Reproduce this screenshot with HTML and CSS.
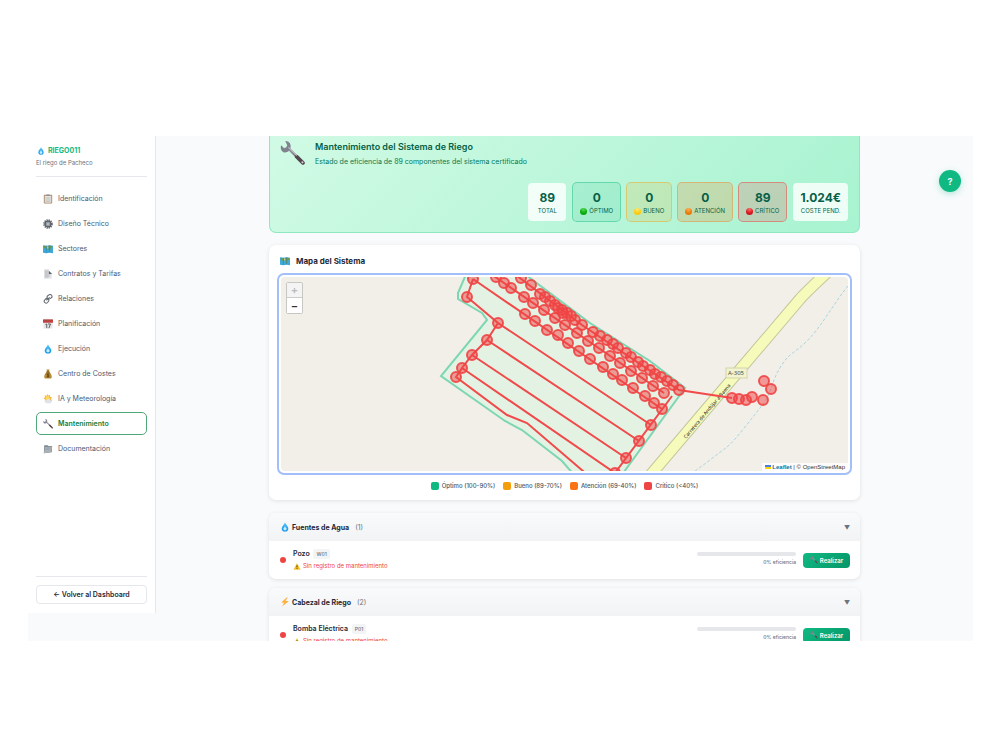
FILE: index.html
```html
<!DOCTYPE html>
<html lang="es">
<head>
    <meta charset="UTF-8">
    <meta name="viewport" content="width=device-width, initial-scale=1.0">
    <title>Mantenimiento - RIEGO011</title>
    <link rel="stylesheet" href="styles.css">
</head>
<body>
    <!-- Iconos -->
    <svg class="sprite" aria-hidden="true">
        <defs>
            <linearGradient id="gota" x1="0" y1="0" x2="0" y2="1">
                <stop offset="0" stop-color="#5cc8fa"/>
                <stop offset="1" stop-color="#0a8fe6"/>
            </linearGradient>
            <linearGradient id="metal" x1="0" y1="0" x2="1" y2="1">
                <stop offset="0" stop-color="#9a9aa6"/>
                <stop offset="1" stop-color="#4f4650"/>
            </linearGradient>
        </defs>
        <symbol id="i-drop" viewBox="0 0 24 24">
            <path d="M12 1C10 6 4 10 4 15.500a8 7.500 0 0 0 16 0C20 10 14 6 12 1z" fill="url(#gota)"/>
            <path d="M12 10c-1 3-4 4-4 7a4 3.500 0 0 0 8 0c0-3-3-4-4-7z" fill="#c8edff"/>
        </symbol>
        <symbol id="i-clipboard" viewBox="0 0 24 24">
            <rect x="2" y="2" width="20" height="21" rx="2" fill="#a9825c"/>
            <rect x="4" y="4" width="16" height="17" fill="#e4e4e2"/>
            <path d="M6 9h12M6 12h12M6 15h12M6 18h12" stroke="#a5a5a5"/>
            <rect x="8" y="1" width="8" height="4" rx="1" fill="#8d8d92"/>
        </symbol>
        <symbol id="i-gear" viewBox="0 0 24 24">
            <circle cx="12" cy="12" r="9.500" fill="none" stroke="#5b6068" stroke-width="4" stroke-dasharray="3 2"/>
            <circle cx="12" cy="12" r="7" fill="#a5abb3" stroke="#5b6068" stroke-width="3"/>
            <circle cx="12" cy="12" r="3" fill="#e6e8ea" stroke="#4a4e55" stroke-width="1"/>
        </symbol>
        <symbol id="i-map" viewBox="0 0 24 24">
            <path d="M0 3l8 1 8-1 8 1v18l-8-1-8 1-8-1z" fill="#3fa9d9"/>
            <path d="M2 4l5 1 3 5-3 3-2-3-3-1zM12 5l4-1 6 1v4l-4 2-2 8-3-5 1-4z" fill="#6f9a52"/>
            <path d="M9 5l4 3-2 4z" fill="#f0d26a"/>
            <path d="M8 4v17M16 3v17" stroke="#2672a3"/>
        </symbol>
        <symbol id="i-page" viewBox="0 0 24 24">
            <path d="M3 1h11v22H3z" fill="#d2d4d8"/>
            <path d="M14 4l8 8-8 1z" fill="#5e6268"/>
            <path d="M14 13h7v10h-7z" fill="#e4e4e7"/>
            <path d="M5 6h6M5 9h6M5 12h6M5 15h11M5 18h11" stroke="#a7aab0"/>
        </symbol>
        <symbol id="i-link" viewBox="0 0 24 24" fill="none" stroke="#666b73" stroke-width="2.500">
            <rect x="10" y="2" width="12" height="9" rx="4.500" transform="rotate(-30 16 7)"/>
            <rect x="2" y="12" width="12" height="9" rx="4.500" transform="rotate(-50 8 16)"/>
            <path d="M8 15l8-7"/>
        </symbol>
        <symbol id="i-calendar" viewBox="0 0 24 24">
            <rect x="1" y="1" width="22" height="22" rx="1" fill="#e6e6e6"/>
            <path d="M0 1h24v8H0z" fill="#c3423f"/>
            <path d="M4 1v4M8 1v4M12 1v4M16 1v4M20 1v4" stroke="#7d5a5a"/>
            <path d="M6 13l3-1v10M12 12h6l-4 10" fill="none" stroke="#44464a" stroke-width="2"/>
        </symbol>
        <symbol id="i-money" viewBox="0 0 24 24">
            <path d="M8 1h8l-2 5c5 4 7 9 7 13 0 3-2 4-4 4H7c-2 0-4-1-4-4 0-4 2-9 7-13z" fill="#b58a35"/>
            <path d="M8 7h8" stroke="#6e4d16" stroke-width="2"/>
            <path d="M15 12c-5-2-7 2-3 3s3 5-3 3M12 10v11" fill="none" stroke="#5e4012" stroke-width="2"/>
        </symbol>
        <symbol id="i-sun" viewBox="0 0 24 24">
            <path d="M11 0l2 4 4-2v5l5 1-3 4 3 4-18 2 1-5-4-2 4-3-1-5 5 1z" fill="#f8b83a"/>
            <circle cx="11" cy="10" r="5" fill="#ffd65a"/>
            <path d="M8 22a4 4 0 0 1 1-8 5 5 0 0 1 9 1 4 4 0 0 1 1 7z" fill="#dfe2e9"/>
        </symbol>
        <symbol id="i-wrench" viewBox="0 0 24 24">
            <path d="M8 7L22 21" stroke="url(#metal)" stroke-width="2.500" stroke-linecap="round"/>
            <path d="M16 15l6 6" stroke="#54474f" stroke-width="3.500" stroke-linecap="round"/>
            <path d="M5 0l2 4-1 2-2 1-3-3c-1 4 1 7 4 7l3-1 2-3c1-4-1-7-5-7z" fill="#80828e"/>
            <path d="M8 6l8 8" stroke="#c0bec8" stroke-width="1"/>
            <circle cx="21.500" cy="20.500" r="1" fill="#d8d0d4"/>
        </symbol>
        <symbol id="i-folder" viewBox="0 0 24 24">
            <path d="M3 3h8l2 2h9l-1 15-19 2z" fill="#7d868e"/>
            <path d="M5 7l17-1-3 14-17 2z" fill="#aab2b8"/>
            <path d="M7 10l11-1M6 13l11-1" stroke="#87919a"/>
        </symbol>
        <symbol id="i-bolt" viewBox="0 0 24 24">
            <path d="M16 1L3 13l7 1-5 9 16-13-8-1 6-8z" fill="#fbb13c"/>
        </symbol>
        <symbol id="i-warning" viewBox="0 0 24 24">
            <path d="M12 2l11 20H1z" fill="#fcc41c" stroke="#e6a90e" stroke-linejoin="round"/>
            <path d="M12 8v7M12 17v3" stroke="#2b2b2b" stroke-width="3"/>
        </symbol>
    </svg>

    <div class="app">
        <aside class="sidebar">
            <div class="brand">
                <div class="brand-name"><svg class="icon"><use href="#i-drop"/></svg>RIEGO011</div>
                <div class="brand-sub">El riego de Pacheco</div>
            </div>
            <nav class="nav">
                <a class="nav-item" href="#"><svg class="icon"><use href="#i-clipboard"/></svg>Identificación</a>
                <a class="nav-item" href="#"><svg class="icon"><use href="#i-gear"/></svg>Diseño Técnico</a>
                <a class="nav-item" href="#"><svg class="icon"><use href="#i-map"/></svg>Sectores</a>
                <a class="nav-item" href="#"><svg class="icon"><use href="#i-page"/></svg>Contratos y Tarifas</a>
                <a class="nav-item" href="#"><svg class="icon"><use href="#i-link"/></svg>Relaciones</a>
                <a class="nav-item" href="#"><svg class="icon"><use href="#i-calendar"/></svg>Planificación</a>
                <a class="nav-item" href="#"><svg class="icon"><use href="#i-drop"/></svg>Ejecución</a>
                <a class="nav-item" href="#"><svg class="icon"><use href="#i-money"/></svg>Centro de Costes</a>
                <a class="nav-item" href="#"><svg class="icon"><use href="#i-sun"/></svg>IA y Meteorología</a>
                <a class="nav-item active" href="#"><svg class="icon"><use href="#i-wrench"/></svg>Mantenimiento</a>
                <a class="nav-item" href="#"><svg class="icon"><use href="#i-folder"/></svg>Documentación</a>
            </nav>
            <div class="sidebar-footer">
                <a class="back" href="#">← Volver al Dashboard</a>
            </div>
        </aside>

        <main class="main">
            <div class="content">
                <section class="hero">
                    <div class="hero-top">
                        <svg class="hero-icon"><use href="#i-wrench"/></svg>
                        <div>
                            <h1>Mantenimiento del Sistema de Riego</h1>
                            <p>Estado de eficiencia de 89 componentes del sistema certificado</p>
                        </div>
                    </div>
                    <div class="stats">
                        <div class="stat"><strong>89</strong><span>TOTAL</span></div>
                        <div class="stat optimo"><strong>0</strong><span><i class="ball"></i>ÓPTIMO</span></div>
                        <div class="stat bueno"><strong>0</strong><span><i class="ball"></i>BUENO</span></div>
                        <div class="stat atencion"><strong>0</strong><span><i class="ball"></i>ATENCIÓN</span></div>
                        <div class="stat critico"><strong>89</strong><span><i class="ball"></i>CRÍTICO</span></div>
                        <div class="stat"><strong>1.024€</strong><span>COSTE PEND.</span></div>
                    </div>
                </section>

                <section class="card map-card">
                    <h2><svg class="icon"><use href="#i-map"/></svg>Mapa del Sistema</h2>
                    <div class="map">
                        <svg class="map-canvas" viewBox="280 277 569 194" preserveAspectRatio="xMidYMid slice">
                            <defs>
                                <marker id="nodo" markerUnits="userSpaceOnUse" markerWidth="14" markerHeight="14" refX="7" refY="7">
                                    <circle cx="7" cy="7" r="5" fill="#ef4444" fill-opacity="0.5" stroke="#ef4444" stroke-width="2" stroke-opacity="0.9"/>
                                </marker>
                                <path id="carretera" d="M686 439L744 370"/>
                            </defs>
                            <!-- carretera y arroyo -->
                            <path class="road-edge" d="M640 487L653 472L743 366L800 299Q804 294 835 265"/>
                            <path class="road" d="M640 487L653 472L743 366L800 299Q804 294 835 265"/>
                            <path class="stream" d="M848 286C837 299 827 317 815 332S793 352 788 357S776 373 773 383S765 402 760 408S735 441 727 447S705 464 695 471"/>
                            <text class="road-name"><textPath href="#carretera">Carretera de Andújar a Baena</textPath></text>
                            <rect class="road-sign" x="726" y="368" width="21" height="10"/>
                            <text class="road-ref" x="736" y="375">A-305</text>
                            <!-- parcela -->
                            <path class="plot" d="M467 272L458 293V299L482 313L487 320L441 376L505 421L522 430L562 461L575 476H621L685 388L650 361L590 323L522 272"/>
                            <!-- tuberías -->
                            <path class="pipe" d="M473 279L467 297L498 323L487 340L472 355L462 368L456 377L507 415L527 423L590 477
                                M462 368L615 473M472 355L626 458M487 340L639 441M498 323L651 425M473 279L662 409
                                M488 272L664 393M512 272L582 325L679 390L732 398M672 396L615 473"/>
                            <!-- componentes -->
                            <path class="nodes" d="M473 279L467 297L498 323L487 340L472 355L462 368L456 377"/>
                            <path class="nodes" d="M496 277L504 283L511 288L524 297L533 303L544 310L555 318L565 325L577 333L588 341L599 348L610 356L620 363L631 371L642 378L653 386L664 393"/>
                            <path class="nodes" d="M525 314L535 321L547 330L558 335L568 343L579 351L590 359L603 367L613 374L622 380L633 388L645 396L654 403L662 409L651 425L639 441L626 458L615 473"/>
                            <path class="nodes" d="M521 278L531 285L540 294L545 297L550 301L555 305L558 308L562 310L563 313L567 313L571 316L575 320L582 325L593 332L600 336L607 340L613 344L618 348L626 353L631 357L638 362L643 366L650 370L655 374L661 377L667 381L673 385L679 390"/>
                            <path class="nodes" d="M732 398L739 399L746 400L752 397L763 400L771 389L764 381"/>
                        </svg>
                        <div class="zoom">
                            <button type="button" disabled aria-label="Acercar">+</button>
                            <button type="button" aria-label="Alejar">−</button>
                        </div>
                        <div class="attribution">
                            <svg class="flag" viewBox="0 0 12 8"><path d="M0 0h12v4H0z" fill="#4c7be1"/><path d="M0 4h12v4H0z" fill="#ffd500"/></svg>
                            <a href="#">Leaflet</a> | © OpenStreetMap
                        </div>
                    </div>
                    <div class="legend">
                        <span><i class="swatch optimo"></i>Óptimo (100-90%)</span>
                        <span><i class="swatch bueno"></i>Bueno (89-70%)</span>
                        <span><i class="swatch atencion"></i>Atención (69-40%)</span>
                        <span><i class="swatch critico"></i>Crítico (&lt;40%)</span>
                    </div>
                </section>

                <section class="card group">
                    <div class="group-header">
                        <svg class="icon"><use href="#i-drop"/></svg>
                        <h3>Fuentes de Agua</h3>
                        <span class="count">(1)</span>
                        <span class="arrow">▼</span>
                    </div>
                    <div class="row">
                        <i class="dot"></i>
                        <div class="info">
                            <div class="name">Pozo <span class="code">W01</span></div>
                            <div class="alert"><svg class="icon"><use href="#i-warning"/></svg>Sin registro de mantenimiento</div>
                        </div>
                        <div class="efficiency">
                            <div class="bar"></div>
                            <span>0% eficiencia</span>
                        </div>
                        <button class="action" type="button"><svg class="icon"><use href="#i-wrench"/></svg>Realizar</button>
                    </div>
                </section>

                <section class="card group">
                    <div class="group-header">
                        <svg class="icon"><use href="#i-bolt"/></svg>
                        <h3>Cabezal de Riego</h3>
                        <span class="count">(2)</span>
                        <span class="arrow">▼</span>
                    </div>
                    <div class="row">
                        <i class="dot"></i>
                        <div class="info">
                            <div class="name">Bomba Eléctrica <span class="code">P01</span></div>
                            <div class="alert"><svg class="icon"><use href="#i-warning"/></svg>Sin registro de mantenimiento</div>
                        </div>
                        <div class="efficiency">
                            <div class="bar"></div>
                            <span>0% eficiencia</span>
                        </div>
                        <button class="action" type="button"><svg class="icon"><use href="#i-wrench"/></svg>Realizar</button>
                    </div>
                </section>
            </div>
        </main>

        <button class="help" type="button">?</button>
    </div>
</body>
</html>
```
FILE: styles.css
```css
* {
    box-sizing: border-box;
}

body {
    margin: 0;
    height: 100vh;
    padding: 136px 27px 109px 28px;
    font-family: Inter, "Liberation Sans", sans-serif;
    font-size: 7px;
    color: #1f2937;
    background: #fff;
}

h1, h2, h3, p {
    margin: 0;
}

a {
    text-decoration: none;
}

button {
    font-family: inherit;
    cursor: pointer;
}

.sprite {
    position: absolute;
    width: 0;
    height: 0;
}

.icon {
    width: 10px;
    height: 10px;
    flex-shrink: 0;
}

.app {
    position: relative;
    display: flex;
    height: 100%;
    overflow: hidden;
    background: #f8fafc;
}

/* Barra lateral */
.sidebar {
    display: flex;
    flex-direction: column;
    width: 128px;
    flex-shrink: 0;
    margin-bottom: 28px;
    padding: 9px 8px;
    background: #fff;
    border-right: 1px solid #e5e7eb;
}

.brand {
    padding-bottom: 7px;
    border-bottom: 1px solid #e5e7eb;
}

.brand-name {
    display: flex;
    align-items: center;
    gap: 2px;
    font-size: 7px;
    line-height: 12px;
    font-weight: 700;
    color: #10b981;
}

.brand-name .icon {
    height: 8px;
}

.brand-sub {
    font-size: 6px;
    line-height: 12px;
    color: #6b7280;
}

.nav {
    display: flex;
    flex-direction: column;
    gap: 2px;
    flex: 1;
    padding-top: 10px;
}

.nav-item {
    display: flex;
    align-items: center;
    gap: 5px;
    height: 23px;
    padding: 0 6px;
    font-size: 7px;
    font-weight: 400;
    color: #4b5a70;
    border: 1px solid transparent;
    border-radius: 5px;
}

.nav-item.active {
    font-weight: 600;
    color: #15803d;
    border-color: #4fa878;
}

.sidebar-footer {
    padding-top: 8px;
    border-top: 1px solid #e5e7eb;
}

.back {
    display: block;
    font-size: 7px;
    line-height: 17px;
    font-weight: 600;
    text-align: center;
    color: #1f2937;
    border: 1px solid #e5e7eb;
    border-radius: 4px;
}

/* Contenido */
.main {
    flex: 1;
}

.content {
    max-width: 591px;
    margin: 0 auto;
}

.hero {
    padding: 4px 10px 10px;
    background: linear-gradient(135deg, #d1fae5, #a7f3d0);
    border: 1px solid #8ee9c1;
    border-top: 0;
    border-radius: 0 0 7px 7px;
    margin-bottom: 12px;
}

.hero-top {
    display: flex;
    gap: 10px;
}

.hero-icon {
    width: 25px;
    height: 27px;
    flex-shrink: 0;
}

.hero h1 {
    font-size: 9px;
    line-height: 14px;
    font-weight: 600;
    color: #065f46;
}

.hero p {
    font-size: 7px;
    line-height: 16px;
    color: #047857;
}

.stats {
    display: flex;
    justify-content: flex-end;
    gap: 5px;
    margin-top: 12px;
}

.stat {
    display: flex;
    flex-direction: column;
    align-items: center;
    min-width: 40px;
    padding: 7px 7px 5px;
    background: rgba(255, 255, 255, 0.8);
    border: 1px solid transparent;
    background-clip: padding-box;
    border-radius: 5px;
    color: #065f46;
}

.stat strong {
    font-size: 12px;
    line-height: 16px;
}

.stat span {
    display: flex;
    align-items: center;
    gap: 2px;
    font-size: 6px;
    line-height: 10px;
}

.stat.optimo {
    background-color: rgba(16, 185, 129, 0.12);
    border-color: rgba(16, 185, 129, 0.5);
}

.stat.bueno {
    background-color: rgba(245, 158, 11, 0.15);
    border-color: rgba(245, 158, 11, 0.5);
}

.stat.atencion {
    background-color: rgba(249, 115, 22, 0.2);
    border-color: rgba(249, 115, 22, 0.5);
}

.stat.critico {
    background-color: rgba(239, 68, 68, 0.2);
    border-color: rgba(239, 68, 68, 0.6);
}

.ball {
    width: 7px;
    height: 7px;
    border-radius: 50%;
}

.optimo .ball {
    background: radial-gradient(circle at 50% 20%, #4fdc4f, #0aa80a 60%);
}

.bueno .ball {
    background: radial-gradient(circle at 50% 20%, #ffe97a, #fcc80a 60%);
}

.atencion .ball {
    background: radial-gradient(circle at 50% 20%, #ffae52, #e67a0a 60%);
}

.critico .ball {
    background: radial-gradient(circle at 50% 20%, #ff6a6a, #d4141c 60%);
}

.card {
    background: #fff;
    border-radius: 7px;
    box-shadow: 0 1px 4px rgba(0, 0, 0, 0.1);
}

/* Mapa */
.map-card {
    padding: 8px;
    margin-bottom: 13px;
}

.map-card h2 {
    display: flex;
    align-items: center;
    gap: 6px;
    padding: 0 3px;
    margin-bottom: 4px;
    font-size: 8px;
    line-height: 16px;
    font-weight: 700;
}

.map {
    position: relative;
    height: 202px;
    padding: 2px;
    border: 2px solid #a3bffa;
    border-radius: 7px;
}

.map-canvas {
    display: block;
    width: 100%;
    height: 100%;
    background: #f2efe9;
    border-radius: 4px;
}

.road-edge {
    fill: none;
    stroke: #c3c79a;
    stroke-width: 12px;
}

.road {
    fill: none;
    stroke: #f6fabb;
    stroke-width: 10px;
}

.stream {
    fill: none;
    stroke: #a5d3e0;
    stroke-width: 1px;
    stroke-dasharray: 3 2;
}

.road-sign {
    fill: #f3f3d2;
    stroke: #d3d3a8;
}

.road-ref {
    font-family: "Noto Sans", sans-serif;
    font-size: 6px;
    text-anchor: middle;
    fill: #4b4b3c;
}

.road-name {
    font-family: "Noto Sans", sans-serif;
    font-size: 5px;
    fill: #222;
}

.plot {
    fill: #d6f5e0;
    fill-opacity: 0.5;
    stroke: #34c48f;
    stroke-width: 2px;
    stroke-opacity: 0.6;
}

.pipe {
    fill: none;
    stroke: #f04a4a;
    stroke-width: 2px;
}

.nodes {
    fill: none;
    marker: url(#nodo);
}

.zoom {
    position: absolute;
    top: 7px;
    left: 7px;
    border: 1px solid #c9c7c3;
    border-radius: 2px;
}

.zoom button {
    display: block;
    width: 15px;
    height: 15px;
    padding: 0;
    font-size: 11px;
    line-height: 14px;
    font-weight: 600;
    color: #333;
    background: #fff;
    border: 0;
}

.zoom button:disabled {
    color: #bbb;
    background: #f4f4f4;
    border-bottom: 1px solid #ccc;
}

.attribution {
    position: absolute;
    right: 2px;
    bottom: 2px;
    padding: 0 3px;
    font-family: "Liberation Sans", Arial, sans-serif;
    font-size: 6px;
    line-height: 8px;
    color: #333;
    background: rgba(255, 255, 255, 0.8);
}

.attribution a {
    font-weight: 700;
    color: #0078a8;
}

.flag {
    width: 6px;
    height: 4px;
}

.legend {
    display: flex;
    justify-content: center;
    gap: 8px;
    padding-top: 5px;
    font-size: 6px;
    line-height: 12px;
    font-weight: 500;
    color: #4b5563;
}

.legend span {
    display: flex;
    align-items: center;
    gap: 3px;
}

.swatch {
    width: 8px;
    height: 8px;
    border-radius: 2px;
}

.swatch.optimo {
    background: #10b981;
}

.swatch.bueno {
    background: #f59e0b;
}

.swatch.atencion {
    background: #f97316;
}

.swatch.critico {
    background: #ef4444;
}

/* Grupos de componentes */
.group {
    margin-bottom: 9px;
    overflow: hidden;
}

.group-header {
    display: flex;
    align-items: center;
    height: 28px;
    padding: 0 10px 0 11px;
    background: linear-gradient(#f9fafb, #f1f3f5);
}

.group-header h3 {
    margin-left: 2px;
    font-size: 7px;
    font-weight: 700;
}

.group-header .count {
    margin-left: 6px;
    color: #6b7280;
}

.arrow {
    margin-left: auto;
    font-size: 6px;
    color: #6b7280;
}

.row {
    display: flex;
    align-items: center;
    height: 38px;
    padding: 0 10px 0 11px;
}

.dot {
    width: 6px;
    height: 6px;
    margin-right: 7px;
    background: #ef4444;
    border-radius: 50%;
}

.info {
    flex: 1;
}

.name {
    font-size: 7px;
    line-height: 12px;
    font-weight: 600;
}

.code {
    padding: 2px 3px;
    margin-left: 2px;
    font-size: 5px;
    font-weight: 500;
    color: #6b7280;
    background: #f3f4f6;
    border-radius: 2px;
}

.alert {
    display: flex;
    align-items: center;
    gap: 2px;
    font-size: 6px;
    line-height: 12px;
    color: #ef4444;
}

.alert .icon {
    width: 8px;
    height: 7px;
}

.efficiency {
    width: 99px;
    margin-right: 7px;
    font-size: 5px;
    line-height: 12px;
    font-weight: 500;
    text-align: right;
    color: #6b7280;
}

.bar {
    height: 4px;
    background: #e5e7eb;
    border-radius: 2px;
}

.action {
    display: flex;
    align-items: center;
    justify-content: center;
    gap: 2px;
    width: 47px;
    height: 15px;
    padding: 0;
    font-size: 6px;
    font-weight: 600;
    color: #fff;
    background: linear-gradient(135deg, #10b981, #059669);
    border: 0;
    border-radius: 4px;
}

.action .icon {
    width: 8px;
    height: 8px;
}

.help {
    position: absolute;
    top: 34px;
    right: 12px;
    width: 22px;
    height: 22px;
    padding: 0;
    font-size: 9px;
    font-weight: 700;
    color: #fff;
    background: #10b981;
    border: 0;
    border-radius: 50%;
    box-shadow: 0 2px 6px rgba(16, 185, 129, 0.3);
}
```
